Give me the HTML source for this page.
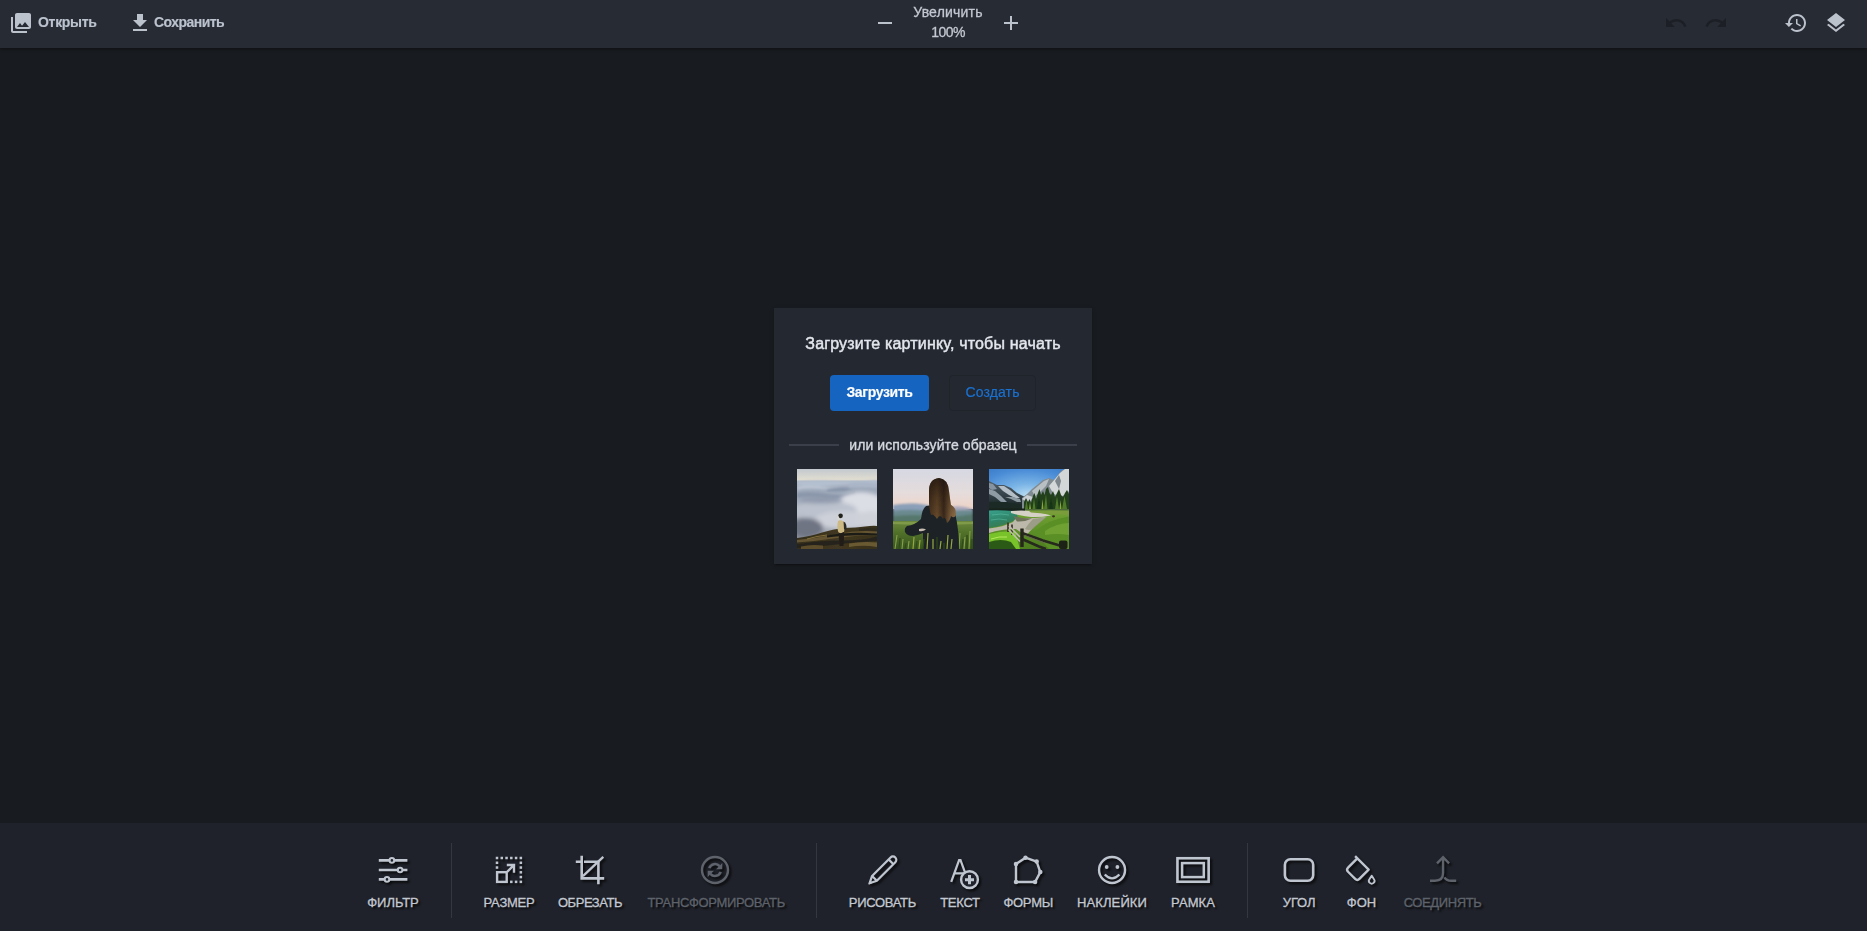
<!DOCTYPE html>
<html lang="ru">
<head>
<meta charset="utf-8">
<title>Pixie</title>
<style>
*{box-sizing:border-box;margin:0;padding:0}
html,body{width:1867px;height:931px;overflow:hidden;background:#181b1f;font-family:"Liberation Sans",sans-serif;color:#c3c8d1}
.abs{position:absolute}
#top{will-change:transform;position:absolute;left:0;top:0;width:1867px;height:48px;background:#272b34;box-shadow:0 1px 3px rgba(0,0,0,.45)}
#top svg{position:absolute;width:24px;height:24px;fill:#bcc2cc}
#top svg.dis{fill:#1c1f25}
#top .t{position:absolute;font-weight:bold;font-size:14px;line-height:16px;color:#bcc3ce;white-space:nowrap;-webkit-text-stroke:.15px #bcc3ce}
#top .z{position:absolute;font-size:14px;line-height:16px;color:#c3c8d1;white-space:nowrap;text-align:center;width:120px;left:888px;-webkit-text-stroke:.3px #c3c8d1}
#bot{position:absolute;left:0;top:823px;width:1867px;height:108px;background:#1f222a}
#bot .sep{position:absolute;top:20px;width:1px;height:75px;background:#343740}
#bot .b{position:absolute;top:0;height:108px;width:0}
#bot .b svg{position:absolute;left:-20px;top:27px;width:40px;height:40px;overflow:visible;fill:none;stroke:#c0c6d0;stroke-width:2;filter:drop-shadow(2px 2px 1.2px rgba(0,0,0,.7))}
#bot .b svg .f{fill:#c0c6d0;stroke:none}
#bot .b svg .bgf{fill:#1f222a}
#bot .b svg .h{fill:#1f222a}
#bot .b.dis svg .f{fill:#5e626b}
#bot .b span{position:absolute;top:72px;left:-100px;width:200px;text-align:center;font-size:13px;line-height:15px;color:#c3c8d1;white-space:nowrap;text-shadow:2px 2px 2px rgba(0,0,0,.8);-webkit-text-stroke:.3px #c3c8d1}
#bot .b.dis svg{stroke:#5e626b}
#bot .b.dis span{color:#5e626b;-webkit-text-stroke:.3px #5e626b}
#dlg{will-change:transform;position:absolute;left:774px;top:308px;width:318px;height:256px;background:#242831;box-shadow:0 3px 1px -2px rgba(0,0,0,.2),0 2px 2px 0 rgba(0,0,0,.14),0 1px 5px 0 rgba(0,0,0,.12)}
#dlg h2{position:absolute;left:0;top:26px;width:318px;text-align:center;font-size:16px;line-height:20px;font-weight:normal;color:#e3e6ec;-webkit-text-stroke:.45px #e3e6ec;white-space:nowrap}
#dlg .p{position:absolute;left:56px;top:67px;width:99px;height:36px;border-radius:4px;background:#1565c0;color:#fff;font-weight:bold;font-size:14px;line-height:34px;text-align:center;-webkit-text-stroke:.15px #fff}
#dlg .s{position:absolute;left:175px;top:67px;width:87px;height:36px;border-radius:4px;border:1px solid #1f232a;color:#1a71d0;-webkit-text-stroke:.2px #1a71d0;font-size:14px;line-height:32px;text-align:center}
#dlg .or{position:absolute;left:0;top:128px;width:318px;text-align:center;font-size:14px;line-height:18px;color:#d6d9df;-webkit-text-stroke:.35px #d6d9df}
#dlg .ln{position:absolute;top:136px;height:2px;width:50px;background:#3a3f4a}
#dlg svg.th{position:absolute;top:161px;width:80px;height:80px}
</style>
</head>
<body>
<div id="top">
<svg style="left:9px;top:11px" viewBox="0 0 24 24"><path d="M22 16V4c0-1.1-.9-2-2-2H8c-1.1 0-2 .9-2 2v12c0 1.1.9 2 2 2h12c1.1 0 2-.9 2-2zm-11-4l2.03 2.71L16 11l4 5H8l3-4zM2 6v14c0 1.1.9 2 2 2h14v-2H4V6H2z"/></svg>
<div class="t" style="left:38px;top:14px;letter-spacing:-.3px">Открыть</div>
<svg style="left:128px;top:11px" viewBox="0 0 24 24"><path d="M19 9h-4V3H9v6H5l7 7 7-7zM5 18v2h14v-2H5z"/></svg>
<div class="t" style="left:154px;top:14px;letter-spacing:-.54px">Сохранить</div>
<svg style="left:873px;top:11px" viewBox="0 0 24 24"><path d="M19 13H5v-2h14v2z"/></svg>
<div class="z" style="top:4px;letter-spacing:.2px">Увеличить</div>
<div class="z" style="top:24px;letter-spacing:-.55px">100%</div>
<svg style="left:999px;top:11px" viewBox="0 0 24 24"><path d="M19 13h-6v6h-2v-6H5v-2h6V5h2v6h6v2z"/></svg>
<svg class="dis" style="left:1664px;top:11px" viewBox="0 0 24 24"><path d="M12.5 8c-2.65 0-5.05.99-6.9 2.6L2 7v9h9l-3.62-3.62c1.39-1.16 3.16-1.88 5.12-1.88 3.54 0 6.55 2.31 7.6 5.5l2.37-.78C21.08 11.03 17.15 8 12.5 8z"/></svg>
<svg class="dis" style="left:1704px;top:11px" viewBox="0 0 24 24"><path d="M18.4 10.6C16.55 8.99 14.15 8 11.5 8c-4.65 0-8.58 3.03-9.96 7.22L3.9 16c1.05-3.19 4.05-5.5 7.6-5.5 1.95 0 3.73.72 5.12 1.88L13 16h9V7l-3.6 3.6z"/></svg>
<svg style="left:1784px;top:11px" viewBox="0 0 24 24"><path d="M13 3c-4.97 0-9 4.03-9 9H1l3.89 3.89.07.14L9 12H6c0-3.870 3.130-7 7-7s7 3.130 7 7-3.130 7-7 7c-1.930 0-3.680-.79-4.940-2.060l-1.420 1.420C8.270 19.990 10.510 21 13 21c4.970 0 9-4.030 9-9s-4.030-9-9-9zm-1 5v5l4.280 2.540.72-1.210-3.500-2.080V8H12z"/></svg>
<svg style="left:1824px;top:11px" viewBox="0 0 24 24"><path d="M11.99 18.54l-7.37-5.73L3 14.07l9 7 9-7-1.630-1.270-7.380 5.740zM12 16l7.360-5.730L21 9l-9-7-9 7 1.630 1.270L12 16z"/></svg>
</div>

<div id="dlg">
<h2 style="letter-spacing:.18px">Загрузите картинку, чтобы начать</h2>
<div class="p" style="letter-spacing:-.37px">Загрузить</div>
<div class="s" style="letter-spacing:.13px">Создать</div>
<div class="ln" style="left:15px"></div>
<div class="or" style="letter-spacing:.09px">или используйте образец</div>
<div class="ln" style="left:253px"></div>
<!--T0--><svg class="th" style="left:23px" viewBox="0 0 80 80" preserveAspectRatio="none">
<defs>
<linearGradient id="a1" x1="0" y1="0" x2="0" y2="1"><stop offset="0" stop-color="#c3c9cf"/><stop offset=".7" stop-color="#dcdad0"/><stop offset="1" stop-color="#e9e1d0"/></linearGradient>
<linearGradient id="a2" x1="0" y1="0" x2="0" y2="1"><stop offset="0" stop-color="#b2bbc8"/><stop offset=".12" stop-color="#9ca7b8"/><stop offset=".3" stop-color="#a3adbc"/><stop offset=".5" stop-color="#b8bdc8"/><stop offset="1" stop-color="#8c909c"/></linearGradient>
<linearGradient id="a3" x1="0" y1="0" x2="1" y2="0"><stop offset="0" stop-color="#342e1d"/><stop offset=".5" stop-color="#413720"/><stop offset="1" stop-color="#38301c"/></linearGradient>
<filter id="b1" x="-20%" y="-20%" width="140%" height="140%"><feGaussianBlur stdDeviation="2.200"/></filter>
<filter id="b2" x="-20%" y="-20%" width="140%" height="140%"><feGaussianBlur stdDeviation=".8"/></filter>
<filter id="b3" x="-20%" y="-20%" width="140%" height="140%"><feGaussianBlur stdDeviation=".35"/></filter>
<clipPath id="c80"><rect width="80" height="80"/></clipPath>
</defs>
<g clip-path="url(#c80)">
<rect width="80" height="13" fill="url(#a1)"/>
<rect y="11.500" width="80" height="68.500" fill="url(#a2)"/>
<g filter="url(#b2)">
<path d="M0 12.500Q20 11 40 12T80 11V15Q60 14 40 16T0 15.500Z" fill="#b4bfcf"/>
<path d="M0 17Q10 15 22 17T44 18Q34 21 22 20T0 21Z" fill="#b9c3d1"/>
<path d="M52 14Q66 12 80 14V19Q66 17 52 19Z" fill="#aab6c8"/>
<path d="M0 24Q15 22 30 25T58 22V27Q40 31 24 29T0 29Z" fill="#8a96aa"/>
<path d="M30 20Q44 18 56 20Q46 23 30 22Z" fill="#8592a8"/>
</g>
<g filter="url(#b1)">
<ellipse cx="64" cy="38" rx="26" ry="15" fill="#dcdee5"/>
<ellipse cx="28" cy="41" rx="32" ry="9" fill="#bcc2ce"/>
<ellipse cx="48" cy="51" rx="30" ry="9" fill="#cdd0d8"/>
<ellipse cx="74" cy="51" rx="14" ry="9" fill="#cfd2d9"/>
<ellipse cx="9" cy="59" rx="17" ry="10" fill="#6f7584"/>
<ellipse cx="24" cy="31" rx="22" ry="3.500" fill="#8e99ac"/>
</g>
<path d="M0 69Q14 67 25 63.500T46 59Q60 58.500 68 57.500T80 57V80H0Z" fill="url(#a3)" filter="url(#b3)"/>
<g filter="url(#b3)">
<path d="M0 71Q20 69 40 65T80 62.500V65.500Q60 66 40 69T0 73.500Z" fill="#665530"/>
<path d="M0 75.500Q20 71.500 44 71.500T80 67.500V72Q60 73 44 75T0 79Z" fill="#25231a"/>
<path d="M30 66.500Q50 62.500 80 64.500V66Q50 65.500 30 68.500Z" fill="#1f1e17"/>
<path d="M52 74.500Q66 72 80 73.500V78Q66 75.500 52 78Z" fill="#6b5a32"/>
<path d="M4 77.500Q14 75 26 76.500V80H4Z" fill="#5d4e2b"/>
<path d="M62 60Q72 58.500 80 59.500V62Q70 61 62 62Z" fill="#2f2b1c"/>
<path d="M10 70Q20 67 30 66" stroke="#8a7440" stroke-width=".9" fill="none"/>
</g>
<g filter="url(#b3)">
<ellipse cx="43.600" cy="46.800" rx="2.300" ry="2.400" fill="#24241f"/>
<path d="M41.200 47.500Q40.800 50 42.200 51.200" stroke="#ded8c8" stroke-width="1.300" fill="none"/>
<path d="M41 52Q43 50.200 46.500 52.500Q48.500 57 47 63Q44 65 41.500 63.500Q39.500 58 41 52Z" fill="#cdb983"/>
<path d="M46.500 52.500Q50 54 49.500 60Q48 61.500 47 60Z" fill="#2a2c28"/>
<path d="M41.500 63.500Q44 65 47 63Q47.200 70 46.500 77H42.500Q42 70 41.500 63.500Z" fill="#201f19"/>
</g>
</g>
</svg>
<svg class="th" style="left:119px" viewBox="0 0 80 80" preserveAspectRatio="none">
<defs>
<linearGradient id="d1" x1="0" y1="0" x2="0" y2="1"><stop offset="0" stop-color="#d6d8e2"/><stop offset=".6" stop-color="#e5dcdc"/><stop offset="1" stop-color="#efd4c6"/></linearGradient>
<linearGradient id="d2" x1="0" y1="0" x2="0" y2="1"><stop offset="0" stop-color="#6c883c"/><stop offset=".4" stop-color="#52722a"/><stop offset="1" stop-color="#38541e"/></linearGradient>
<linearGradient id="d4" x1="0" y1="0" x2="0" y2="1"><stop offset="0" stop-color="#1c130c" stop-opacity=".8"/><stop offset=".45" stop-color="#1c130c" stop-opacity=".35"/><stop offset="1" stop-color="#1c130c" stop-opacity="0"/></linearGradient><linearGradient id="d3" x1="0" y1="0" x2="1" y2="0"><stop offset="0" stop-color="#4a3320"/><stop offset=".3" stop-color="#6e4e2e"/><stop offset=".55" stop-color="#3c2a1c"/><stop offset=".8" stop-color="#80603c"/><stop offset="1" stop-color="#9a7850"/></linearGradient>
</defs>
<g clip-path="url(#c80)">
<rect width="80" height="40" fill="url(#d1)"/>
<g filter="url(#b2)">
<path d="M0 36Q10 34 22 34.5T40 38V46H0Z" fill="#8a9fb8"/>
<path d="M58 38Q68 36 80 40V46H58Z" fill="#a9a9bd"/>
<path d="M0 42Q14 40 30 41.5T56 42T80 41V54H0Z" fill="#6a8a90"/>
<path d="M0 47Q20 45 40 47T80 45V54H0Z" fill="#56786c"/>
</g>
<rect y="52" width="80" height="28" fill="url(#d2)"/>
<g filter="url(#b3)">
<path d="M0 53H80V55Q40 57 0 55Z" fill="#7f9a48"/>
<path d="M2 80L4 66M9 80L10 70M15 80L16 72M66 80L67 64M71 80L72 68M76 80L77 62M61 80L61 70" stroke="#86a04a" stroke-width="1.1"/>
<path d="M6 80L7 69M12 80L13 74M69 80L70 70M74 80L74 66M79 80L79 70" stroke="#2f4a1a" stroke-width="1.2"/>
</g>
<g filter="url(#b3)">
<path d="M33 37Q29 40 28 50Q22 56 14 57Q11 59 12 63Q14 67 20 67Q26 66 30 64L30 80H66Q66 60 62 44Q60 36 55 34Z" fill="#1b2326"/>
<path d="M36 22Q36 10 46 9Q55 10 56 22Q57 30 58 36Q63 38 63 46Q61 50 58 47Q57 52 54 54Q52 46 50 50Q47 44 44 50Q40 44 38 46Q36 40 36 34Z" fill="url(#d3)"/>
<path d="M36 22Q36 10 46 9Q55 10 56 22Q57 30 58 36Q63 38 63 46Q61 50 58 47Q57 52 54 54Q52 46 50 50Q47 44 44 50Q40 44 38 46Q36 40 36 34Z" fill="url(#d4)"/><path d="M26 60Q30 59 33 60.5Q30 63 26 62Z" fill="#c8bdb2"/>
</g>
<g filter="url(#b3)">
<path d="M20 80L21 68M26 80L27 71M34 80L35 64M40 80L40 70M47 80L48 72M54 80L55 66M58 80L59 70" stroke="#95a843" stroke-width="1.2"/>
<path d="M23 80L24 72M30 80L31 70M44 80L44 68M51 80L51 74" stroke="#2f4a1a" stroke-width="1.2"/>
</g>
</g>
</svg>
<svg class="th" style="left:215px" viewBox="0 0 80 80" preserveAspectRatio="none">
<defs>
<radialGradient id="e1" cx=".48" cy=".62" r=".75"><stop offset="0" stop-color="#b8dcf2"/><stop offset=".35" stop-color="#7ab4e6"/><stop offset=".8" stop-color="#4a8cd6"/><stop offset="1" stop-color="#3f80cc"/></radialGradient>
<linearGradient id="e2" x1="0" y1="0" x2="0" y2="1"><stop offset="0" stop-color="#74a436"/><stop offset=".5" stop-color="#5f9228"/><stop offset="1" stop-color="#4c7c1e"/></linearGradient>
<linearGradient id="e3" x1="0" y1="0" x2=".4" y2="1"><stop offset="0" stop-color="#3aa18c"/><stop offset=".6" stop-color="#2f8468"/><stop offset="1" stop-color="#3c7a4c"/></linearGradient>
<linearGradient id="e4" x1="0" y1="0" x2="0" y2="1"><stop offset="0" stop-color="#525f6a"/><stop offset=".5" stop-color="#323f46"/><stop offset="1" stop-color="#121c1a"/></linearGradient>
</defs>
<g clip-path="url(#c80)">
<rect width="80" height="42" fill="url(#e1)"/>
<g filter="url(#b3)">
<path d="M0 12L4 14L8 16L15 16L22 19L28 24L33 26.5L36 28V42H0Z" fill="url(#e4)"/>
<path d="M9 17L15 17L21 21L27 26L31 29L26 29L20 26L14 22Z" fill="#b4bec6"/>
<path d="M0 20L6 22L12 27L18 33L12 33L6 28L0 25Z" fill="#8f9ba4"/>
<path d="M16 28L22 30L28 33L32 33L31 30L24 28Z" fill="#8d99a0"/>
<path d="M0 14L4 15L8 20L3 21L0 19Z" fill="#8693a0"/>
<path d="M0 33Q12 32 22 34T36 34V42H0Z" fill="#1b2a26"/>
<path d="M33 29L38 25L43 20L48 16L54 11L60 9L65 11L69 6L73 1L80 0V42H33Z" fill="#808b91"/>
<path d="M60 17L66 10L71 4L76 0H80V22L76 26L70 28L64 24Z" fill="#d3d7d8"/>
<path d="M43 22L49 17L55 12L60 10L57 17L51 23L46 27Z" fill="#b9c0c3"/>
<path d="M66 12L70 6L72 12L70 20Z" fill="#7b868c"/>
<path d="M33 30L38 26L44 28L40 34Z" fill="#c9cfd2"/>
</g>
<g filter="url(#b3)">
<path d="M35 41V33L37 29L39 33L40.500 30L42 34L44 27L45.500 24L47 30L49 24L50.500 20L52 26L54 22L55.500 26L57 20L59 18L60.500 24L62 26L64 22L66 28L68 24L70 20L72 26L74 28L76 24L78 21L80 25V41H35Z" fill="#223f1a"/>
<path d="M36 40L37.500 31L39 40ZM43.500 40L45 29L46.500 40ZM55 40L57 25L58.500 40ZM66 40L68 27L70 40ZM73 40L75.500 27L78 40Z" fill="#4f7a2a"/>
<path d="M48 40L50 27L52 40ZM60 40L62 29L64 40Z" fill="#183416"/>
<path d="M40 40L41 33L42 40ZM52.500 40L53.500 30L54.500 40ZM70.500 40L71.500 31L72.500 40Z" fill="#86a83c"/>
</g>
<rect y="40" width="80" height="40" fill="url(#e2)"/>
<g filter="url(#b3)">
<path d="M0 39.500H36V42H0Z" fill="#15221c"/>
<path d="M36 40H80V41.500H36Z" fill="#4f6a38"/>
<path d="M0 41.500Q12 41 24 42Q30 45 28 50Q16 57 0 59Z" fill="url(#e3)"/>
<path d="M3 46Q12 44 20 46M2 51Q10 49 18 51" stroke="#5fbfa6" stroke-width=".8" fill="none" opacity=".7"/>
<path d="M22 42Q40 40.500 52 44Q60 45.500 62 46.500Q52 48.500 42 48Q30 46.500 22 44Z" fill="#d6d1c6"/>
<path d="M27 49Q40 50 57 48Q51 53 45 58Q40 63 37 67L27 60Q12 60 0 64V59.500Q14 58 24 53Z" fill="#bcb8aa"/>
<path d="M24 47Q33 49.500 43 49.500Q36 53 28 52.500Z" fill="#6d7258"/>
<path d="M44 50Q52 49 58 48Q50 54 44 60Q40 62 36 60Q40 54 44 50Z" fill="#8f9176" opacity=".7"/>
<path d="M40 42Q60 41 80 42V46Q60 45 42 43.500Z" fill="#7a9c3a"/>
<path d="M0 65Q14 61.500 26 62.500L31 80H0Z" fill="#78c22a"/>
<path d="M0 73Q12 69 22 73L27 80H0Z" fill="#2c5a12"/>
<path d="M2 70Q10 67 18 68" stroke="#b5ea5a" stroke-width="1" fill="none"/>
<path d="M45 63Q60 50 80 47.500V80H60Z" fill="#5a8f26"/>
<path d="M56 62Q68 54 80 54V66Q68 64 56 66Z" fill="#76a838" opacity=".7"/>
<ellipse cx="64.500" cy="47.300" rx="1.500" ry="1.100" fill="#3a3020"/>
</g>
<g filter="url(#b3)">
<path d="M19 53.500V63M23 55.500V66" stroke="#3a3424" stroke-width="1.700"/>
<path d="M20 57L31 68M19.500 60.500L31 72.500" stroke="#c2beb0" stroke-width="1.600"/>
<path d="M33 59.500V78" stroke="#25261a" stroke-width="3.400"/>
<path d="M33 64L54 71.500L74 77.500M33 70L50 77.500L57 80" stroke="#27291d" stroke-width="2.800"/>
<path d="M36 66.500L56 74" stroke="#66664f" stroke-width="1"/>
<rect x="70" y="71.500" width="8.500" height="8.500" rx="2" fill="#1f2017"/>
</g>
</g>
</svg>
<!--T1-->
</div>

<div id="bot">
<div class="sep" style="left:451px"></div>
<div class="sep" style="left:816px"></div>
<div class="sep" style="left:1247px"></div>
<div class="b" style="left:393px"><svg viewBox="373 850 40 40"><path stroke-width="2.6" d="M378.8 860.4H407.4M378.8 870H407.4M378.8 879.4H407.4"/><g class="h" stroke-width="2"><circle cx="391.9" cy="860.4" r="2.3"/><circle cx="400.1" cy="870" r="2.3"/><circle cx="387" cy="879.4" r="2.3"/></g></svg><span style="letter-spacing:0px">ФИЛЬТР</span></div>
<div class="b" style="left:509px"><svg viewBox="489 850 40 40"><g class="f"><rect x="495.75" y="856.75" width="2.5" height="2.5"/><rect x="500.52" y="856.75" width="2.5" height="2.5"/><rect x="505.29" y="856.75" width="2.5" height="2.5"/><rect x="510.06" y="856.75" width="2.5" height="2.5"/><rect x="514.83" y="856.75" width="2.5" height="2.5"/><rect x="519.60" y="856.75" width="2.5" height="2.5"/><rect x="495.75" y="861.52" width="2.5" height="2.5"/><rect x="495.75" y="866.29" width="2.5" height="2.5"/><rect x="519.60" y="861.52" width="2.5" height="2.5"/><rect x="519.60" y="866.29" width="2.5" height="2.5"/><rect x="519.60" y="871.06" width="2.5" height="2.5"/><rect x="519.60" y="875.83" width="2.5" height="2.5"/><rect x="519.60" y="880.60" width="2.5" height="2.5"/><rect x="510.06" y="880.60" width="2.5" height="2.5"/><rect x="514.83" y="880.60" width="2.5" height="2.5"/></g><rect x="497.1" y="872.2" width="9.6" height="9.7" stroke-width="2.4"/><path stroke-width="2.4" d="M507 872L513.6 865.4M506.8 865H514V872.8" stroke-linejoin="miter"/></svg><span style="letter-spacing:-0.25px">РАЗМЕР</span></div>
<div class="b" style="left:590px"><svg viewBox="570 850 40 40"><path stroke-width="2.6" d="M575.8 861.7H580.5M584 861.7H598.4V884.2M581.7 855.8V878.4H604.2"/><path stroke-width="2.3" d="M582.9 876.2L603.3 856.9"/></svg><span style="letter-spacing:-0.44px">ОБРЕЗАТЬ</span></div>
<div class="b dis" style="left:715px"><svg viewBox="695 850 40 40"><circle cx="715" cy="870" r="13" stroke-width="2.4"/><path stroke-width="2.6" d="M709.3 868.2A6 6 0 0 1 719.6 866.2M720.7 871.8A6 6 0 0 1 710.4 873.8"/><path class="f" d="M722.3 863V869.3H716zM707.7 877V870.7H714z"/></svg><span style="letter-spacing:-0.33px;margin-left:1.2px">ТРАНСФОРМИРОВАТЬ</span></div>
<div class="b" style="left:882px"><svg viewBox="862 850 40 40"><g transform="translate(868.4 884.4) rotate(-45)"><path stroke-width="2.2" stroke-linejoin="round" d="M1.6 0L8.6 -3.4H34.7A3.4 3.4 0 0 1 34.7 3.4H8.6ZM8.6 -3.4V3.4M32 -3.4V3.4"/><path class="f" d="M0 0L3.4 -1.6V1.6Z"/></g></svg><span style="letter-spacing:-0.32px;margin-left:0.4px">РИСОВАТЬ</span></div>
<div class="b" style="left:959px"><svg viewBox="939 850 40 40"><path stroke-width="2.2" stroke-linejoin="miter" d="M951.2 881.8L959.1 860.1H960.5L968.5 881.8M955 873.4H965"/><circle class="bgf" cx="969.5" cy="879.65" r="8.4" stroke-width="2.4"/><path stroke-width="3" d="M965 879.65H974M969.5 875.1V884.2"/></svg><span style="letter-spacing:-0.27px;margin-left:1px">ТЕКСТ</span></div>
<div class="b" style="left:1027px"><svg viewBox="1007 850 40 40"><path stroke-width="2.4" stroke-linejoin="round" d="M1016 864L1025.5 857.7L1036.65 861.6L1040.3 872.1L1035.1 882L1016 882Z"/><g class="f"><circle cx="1016" cy="864" r="2.25"/><circle cx="1025.5" cy="857.7" r="2.25"/><circle cx="1036.65" cy="861.6" r="2.25"/><circle cx="1040.3" cy="872.1" r="2.25"/><circle cx="1035.1" cy="882" r="2.25"/><circle cx="1016" cy="882" r="2.25"/></g></svg><span style="letter-spacing:-0.25px;margin-left:1.2px">ФОРМЫ</span></div>
<div class="b" style="left:1111px"><svg viewBox="1091 850 40 40"><circle cx="1112.06" cy="870" r="13" stroke-width="2.4"/><g class="f"><circle cx="1106.7" cy="867" r="1.9"/><circle cx="1117.4" cy="867" r="1.9"/></g><path stroke-width="2.4" d="M1104.75 874.5Q1112.06 882.2 1119.4 874.5"/></svg><span style="letter-spacing:0.1px;margin-left:1px">НАКЛЕЙКИ</span></div>
<div class="b" style="left:1192px"><svg viewBox="1172 850 40 40"><rect x="1177.45" y="858.25" width="31.2" height="23.5" stroke-width="2.6"/><rect x="1182.1" y="863.1" width="21.7" height="14" stroke-width="2.5"/></svg><span style="letter-spacing:0.05px;margin-left:1px">РАМКА</span></div>
<div class="b" style="left:1298px"><svg viewBox="1278 850 40 40"><rect x="1284.9" y="859.25" width="28.3" height="21.45" rx="5.5" stroke-width="2.6"/></svg><span style="letter-spacing:-0.1px;margin-left:1.1px">УГОЛ</span></div>
<div class="b" style="left:1360px"><svg viewBox="1340 850 40 40"><path stroke-width="2.4" stroke-linejoin="round" d="M1355.1 856.1L1368.65 869.65L1359.4 878.9Q1357.3 881 1355.2 878.9L1348.05 871.75Q1345.95 869.65 1348.05 867.55L1357.3 858.3"/><path stroke-width="1.9" stroke-linejoin="round" d="M1371.7 875.7L1374 879.2A2.8 2.8 0 1 1 1369.4 879.2Z"/></svg><span style="letter-spacing:-0.1px;margin-left:1.4px">ФОН</span></div>
<div class="b dis" style="left:1442px"><svg viewBox="1422 850 40 40"><path stroke-width="2.4" d="M1437 863.3L1443.06 857.2L1449.1 863.3M1443.06 857.6V873Q1443.06 880.7 1435 880.7H1430M1444.4 877.3Q1446.5 880.7 1451 880.7H1456.2"/></svg><span style="letter-spacing:-0.4px;margin-left:0.5px">СОЕДИНЯТЬ</span></div>
</div>
</body>
</html>
